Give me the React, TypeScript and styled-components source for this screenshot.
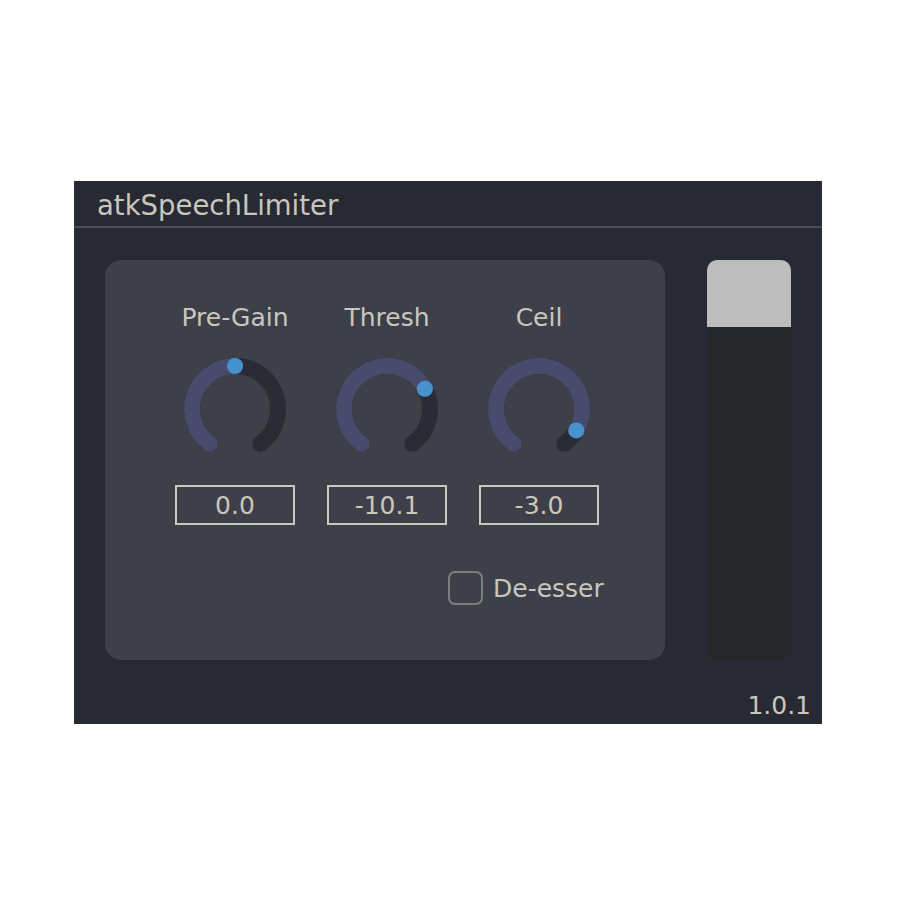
import * as React from 'react';
import styled, { createGlobalStyle } from 'styled-components';

const GlobalStyle = createGlobalStyle`
  html, body {
    margin: 0;
    padding: 0;
    background: #ffffff;
  }
  body {
    font-family: "DejaVu Sans", Verdana, sans-serif;
  }
`;

const colors = {
  window: '#272a33',
  line: '#4a4d55',
  panel: '#3d4048',
  text: '#c9c6bd',
  track: '#2a2c35',
  fill: '#484b6b',
  thumb: '#4592cf',
  checkbox: '#7c7d80',
  meterBg: '#26272b',
  meterLevel: '#bdbdbd',
};

const Page = styled.div`
  padding: 181px 0 0 74px;
`;

const Window = styled.div`
  width: 748px;
  background: ${colors.window};
  display: flex;
  flex-direction: column;
  color: ${colors.text};
`;

const TitleBar = styled.div`
  height: 42px;
  padding: 3px 0 0 23px;
  border-bottom: 2px solid ${colors.line};
  font-size: 27.5px;
  line-height: 42px;
  white-space: nowrap;
`;

const Body = styled.div`
  display: flex;
  flex-direction: row;
  gap: 42px;
  padding: 32px 31px 0 31px;
`;

const Panel = styled.div`
  width: 560px;
  height: 400px;
  box-sizing: border-box;
  background: ${colors.panel};
  border-radius: 16px;
  padding: 43px 0 0 70px;
  display: flex;
  flex-direction: column;
`;

const KnobRow = styled.div`
  display: flex;
  flex-direction: row;
  gap: 32px;
`;

const KnobColumn = styled.div`
  width: 120px;
  display: flex;
  flex-direction: column;
  align-items: center;
  gap: 16px;
`;

const Label = styled.div`
  font-size: 25px;
  line-height: 30px;
  height: 30px;
  white-space: nowrap;
`;

const ValueBox = styled.div`
  width: 120px;
  height: 40px;
  box-sizing: border-box;
  border: 2px solid ${colors.text};
  display: flex;
  align-items: center;
  justify-content: center;
  font-size: 25px;
  line-height: 1;
`;

const CheckRow = styled.label`
  display: flex;
  flex-direction: row;
  align-items: center;
  gap: 10px;
  margin: 46px 0 0 273px;
  font-size: 25px;
  line-height: 30px;
`;

const CheckText = styled.span`
  padding-top: 2px;
`;

const CheckBox = styled.span<{ checked?: boolean }>`
  width: 35px;
  height: 34px;
  box-sizing: border-box;
  border: 2px solid ${colors.checkbox};
  border-radius: 7px;
  background: ${({ checked }) => (checked ? colors.thumb : 'transparent')};
`;

const Meter = styled.div`
  width: 84px;
  height: 400px;
  border-radius: 10px;
  overflow: hidden;
  background: ${colors.meterBg};
  display: flex;
  flex-direction: column;
`;

const MeterLevel = styled.div`
  background: ${colors.meterLevel};
`;

const Footer = styled.div`
  display: flex;
  justify-content: flex-end;
  padding: 31px 11px 3px 0;
  font-size: 25px;
  line-height: 30px;
`;

const START = 216;
const END = 504;
const R = 43;
const C = 60;

const point = (deg: number) => {
  const a = (deg * Math.PI) / 180;
  return [C + R * Math.sin(a), C - R * Math.cos(a)];
};

const arc = (from: number, to: number) => {
  const [x1, y1] = point(from);
  const [x2, y2] = point(to);
  const large = to - from > 180 ? 1 : 0;
  return `M ${x1} ${y1} A ${R} ${R} 0 ${large} 1 ${x2} ${y2}`;
};

const Knob = ({ value }: { value: number }) => {
  const angle = START + (END - START) * value;
  const [tx, ty] = point(angle);
  return (
    <svg width="120" height="120" viewBox="0 0 120 120">
      <path d={arc(START, END)} fill="none" stroke={colors.track} strokeWidth={16} strokeLinecap="round" />
      <path d={arc(START, angle)} fill="none" stroke={colors.fill} strokeWidth={16} strokeLinecap="round" />
      <circle cx={tx} cy={ty} r={8} fill={colors.thumb} />
    </svg>
  );
};

const knobs = [
  { label: 'Pre-Gain', value: 0.5, text: '0.0' },
  { label: 'Thresh', value: 0.715, text: '-10.1' },
  { label: 'Ceil', value: 0.916, text: '-3.0' },
];

const App = () => {
  const level = 67;
  return (
    <Page>
      <GlobalStyle />
      <Window>
        <TitleBar>atkSpeechLimiter</TitleBar>
        <Body>
          <Panel>
            <KnobRow>
              {knobs.map((k) => (
                <KnobColumn key={k.label}>
                  <Label>{k.label}</Label>
                  <Knob value={k.value} />
                  <ValueBox>{k.text}</ValueBox>
                </KnobColumn>
              ))}
            </KnobRow>
            <CheckRow>
              <CheckBox />
              <CheckText>De-esser</CheckText>
            </CheckRow>
          </Panel>
          <Meter>
            <MeterLevel style={{ height: level }} />
          </Meter>
        </Body>
        <Footer>1.0.1</Footer>
      </Window>
    </Page>
  );
};

export default App;
